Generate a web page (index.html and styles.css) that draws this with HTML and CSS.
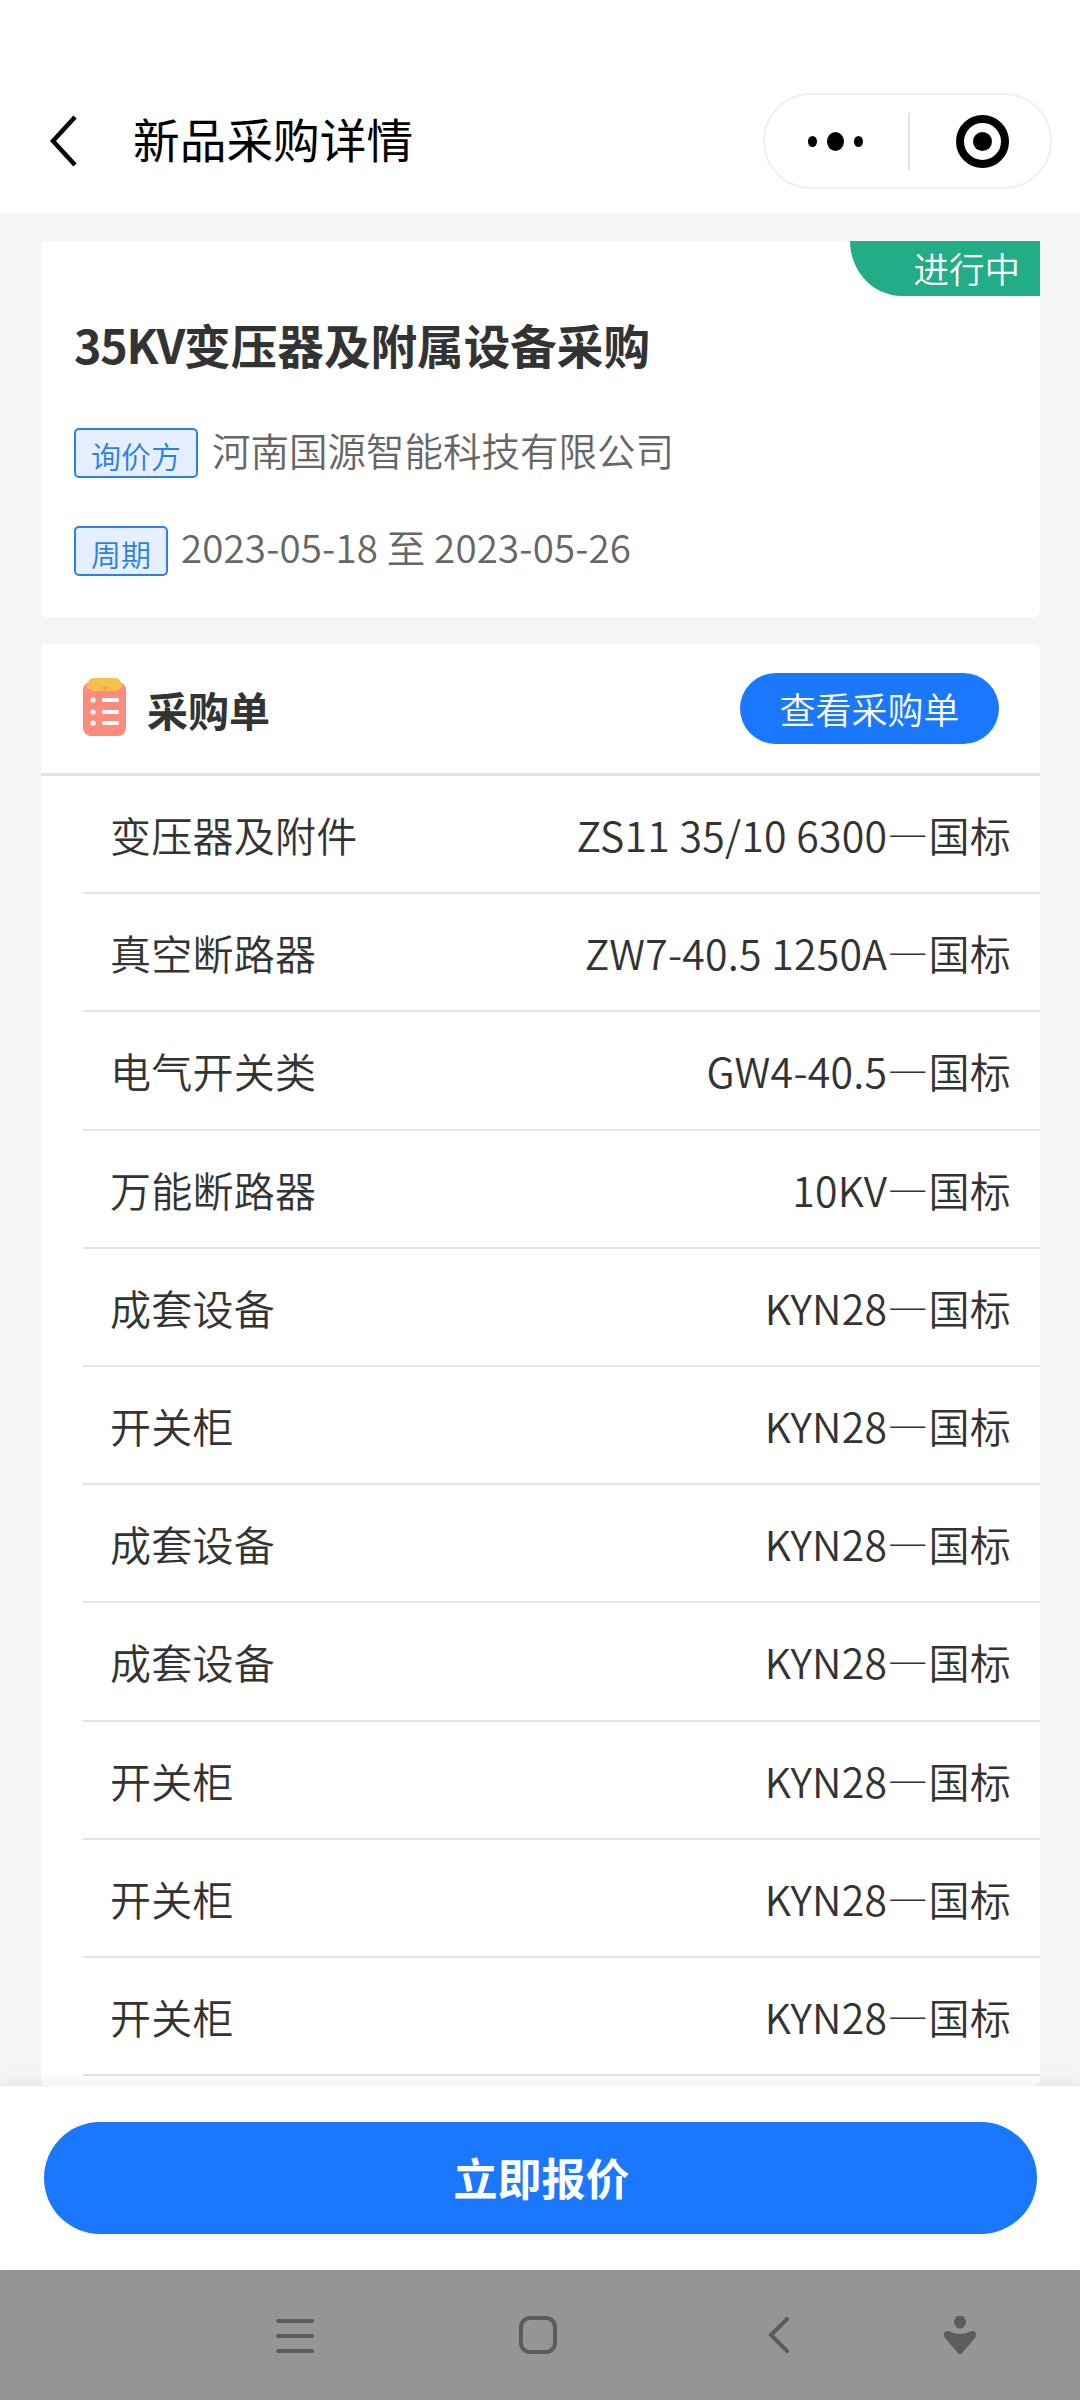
FILE: index.html
```html
<!DOCTYPE html>
<html lang="zh-CN">
<head>
<meta charset="utf-8">
<title>新品采购详情</title>
<link rel="stylesheet" href="styles.css">
</head>
<body>
<div class="app">
  <header class="topbar">
    <svg class="back" viewBox="0 0 28 52"><path d="M25 2 3 26l22 24" /></svg>
    <h1 class="page-title">新品采购详情</h1>
    <div class="capsule">
      <div class="dots"><i class="dot"></i><i class="dot big"></i><i class="dot"></i></div>
      <i class="capsule-line"></i>
      <div class="target"><i></i></div>
    </div>
  </header>
  <main class="content">
    <section class="card info">
      <div class="status">进行中</div>
      <h2 class="info-title"><span class="latin">35KV</span>变压器及附属设备采购</h2>
      <div class="meta meta-company"><span class="tag">询价方</span><span class="meta-text">河南国源智能科技有限公司</span></div>
      <div class="meta meta-date"><span class="tag">周期</span><span class="meta-text">2023-05-18 至 2023-05-26</span></div>
    </section>
    <section class="card list">
      <div class="list-head">
        <svg class="list-icon" viewBox="0 0 44 58">
          <rect x="0" y="4" width="43" height="54" rx="8" fill="#fb8b7c"/>
          <path d="M5 5Q6 0 11 0H32Q37 0 38 5L40 8Q36 13 31 13H12Q7 13 3 8z" fill="#f7c04e"/>
          <path d="M18 9h7l-3.500 3.500z" fill="#f59f4a"/>
          <g fill="#fff">
            <circle cx="10" cy="22" r="2.600"/><circle cx="10" cy="34" r="2.600"/><circle cx="10" cy="45" r="2.600"/>
            <rect x="19" y="20" width="17" height="4" rx="1.500"/><rect x="19" y="32" width="17" height="4" rx="1.500"/><rect x="19" y="43" width="17" height="4" rx="1.500"/>
          </g>
        </svg>
        <h3 class="list-title">采购单</h3>
        <div class="view-btn">查看采购单</div>
      </div>
      <div class="row"><span>变压器及附件</span><span>ZS11 35/10 6300—国标</span></div>
      <div class="row"><span>真空断路器</span><span>ZW7-40.5 1250A—国标</span></div>
      <div class="row"><span>电气开关类</span><span>GW4-40.5—国标</span></div>
      <div class="row"><span>万能断路器</span><span>10KV—国标</span></div>
      <div class="row"><span>成套设备</span><span>KYN28—国标</span></div>
      <div class="row"><span>开关柜</span><span>KYN28—国标</span></div>
      <div class="row"><span>成套设备</span><span>KYN28—国标</span></div>
      <div class="row"><span>成套设备</span><span>KYN28—国标</span></div>
      <div class="row"><span>开关柜</span><span>KYN28—国标</span></div>
      <div class="row"><span>开关柜</span><span>KYN28—国标</span></div>
      <div class="row"><span>开关柜</span><span>KYN28—国标</span></div>
    </section>
  </main>
  <footer class="footer"><div class="quote-btn">立即报价</div></footer>
  <nav class="navbar">
    <svg class="nav-icon menu" viewBox="0 0 38 34"><path d="M2 2h34M2 17h34M2 32h34"/></svg>
    <svg class="nav-icon home" viewBox="0 0 38 38"><rect x="2" y="2" width="34" height="34" rx="9"/></svg>
    <svg class="nav-icon prev" viewBox="0 0 22 36"><path d="M19 2 3 18l16 16"/></svg>
    <svg class="nav-icon person" viewBox="0 0 34 38"><ellipse cx="17" cy="6" rx="6" ry="6.5"/><path d="M2 16c4-3 7 2 15 2s11-5 15-2c2 2 1 4 0 6L20 36c-2 3-4 3-6 0L2 22c-1-2-2-4 0-6z"/></svg>
  </nav>
</div>
</body>
</html>
```
FILE: styles.css
```css
* { box-sizing: border-box; margin: 0; padding: 0; }
html, body { width: 1080px; height: 2400px; overflow: hidden; }
body { font-family: "Noto Sans CJK SC", "Noto Sans", sans-serif; background: #f5f5f5; color: #333; }
.app { height: 2400px; display: flex; flex-direction: column; }

.topbar { height: 213px; flex: none; background: #fff; display: flex; align-items: center; padding: 69px 28px 0 50px; }
.back { width: 28px; height: 52px; flex: none; fill: none; stroke: #000; stroke-width: 4.5; }
.page-title { margin-left: 55px; margin-bottom: 5px; font-size: 46.7px; font-weight: 400; color: #000; line-height: 1; flex: 1; }
.capsule { width: 289px; height: 96px; border: 2px solid #efefef; border-radius: 48px; display: flex; align-items: center; flex: none; }
.dots { width: 143px; display: flex; align-items: center; justify-content: center; gap: 10px; padding-right: 2px; }
.dot { width: 9px; height: 11px; border-radius: 50%; background: #000; }
.dot.big { width: 17px; height: 19px; }
.capsule-line { width: 2px; height: 57px; background: #e3e3e3; flex: none; }
.target { flex: 1; display: flex; justify-content: center; align-items: center; padding-left: 4px; }
.target i { width: 53px; height: 53px; border-radius: 50%; border: 8px solid #000; display: flex; align-items: center; justify-content: center; }
.target i::after { content: ""; width: 19px; height: 19px; border-radius: 50%; background: #000; }

.content { flex: 1; min-height: 0; overflow: hidden; padding: 28px 40px 0 41px; display: flex; flex-direction: column; gap: 27px; }
.card { background: #fff; border-radius: 6px; flex: none; }
.info { height: 376px; position: relative; padding: 0 33px; }
.status { position: absolute; right: 0; top: 0; width: 190px; height: 55px; background: #23ad87; color: #fff; font-size: 35.5px; font-weight: 350; line-height: 53px; text-align: right; padding-right: 20px; border-bottom-left-radius: 52px 55px; }
.info-title { font-size: 46.6px; font-weight: 700; line-height: 64px; padding-top: 71px; height: 138px; color: #333; }
.latin { letter-spacing: -1.2px; }
.meta { display: flex; align-items: center; }
.meta-company { margin-top: 49px; height: 50px; }
.meta-date { margin-top: 48px; height: 50px; }
.tag { height: 100%; padding: 0 15px; background: #e5efff; border: 2px solid #2c80ee; border-radius: 5px; color: #2a7fe8; font-size: 30px; font-weight: 350; line-height: 50px; flex: none; }
.meta-text { margin-left: 14px; margin-bottom: 8px; font-size: 38.5px; font-weight: 350; color: #666; line-height: 50px; }
.meta-date .meta-text { margin-left: 13px; margin-bottom: 11px; letter-spacing: .15px; }

.list { flex: 1; }
.list-head { height: 132px; display: flex; align-items: center; padding: 0 41px 0 42px; border-bottom: 3px solid #e3e3e3; }
.list-icon { width: 44px; height: 58px; flex: none; margin-top: -3px; }
.list-title { margin-left: 20px; font-size: 41px; font-weight: 700; flex: 1; color: #333; }
.view-btn { width: 259px; height: 71px; border-radius: 36px; background: #1a78ff; color: #fff; font-size: 36px; font-weight: 350; line-height: 71px; text-align: center; }
.row { height: 118.2px; margin-left: 42px; padding: 0 29px 0 27px; border-bottom: 2px solid #e3e3e3; display: flex; justify-content: space-between; align-items: center; font-size: 41px; font-weight: 350; letter-spacing: .25px; color: #333; white-space: nowrap; }

.footer { height: 184px; flex: none; background: #fff; padding: 36px 43px 0 44px; box-shadow: 0 -6px 14px rgba(0,0,0,.05); position: relative; }
.quote-btn { height: 112px; border-radius: 56px; background: #1a78ff; color: #fff; font-size: 44px; font-weight: 700; line-height: 110px; text-align: center; padding-left: 2px; }

.navbar { height: 130px; flex: none; background: #959595; display: flex; align-items: flex-start; padding-top: 46px; }
.nav-icon { flex: none; fill: none; stroke: #5c5c5c; stroke-width: 4; stroke-linecap: round; }
.menu { width: 38px; height: 34px; margin-left: 276px; margin-top: 3px; }
.home { width: 38px; height: 38px; margin-left: 205px; }
.prev { width: 22px; height: 36px; margin-left: 211px; margin-top: 1px; }
.person { width: 34px; height: 38px; margin-left: 153px; fill: #5c5c5c; stroke: none; }
```
